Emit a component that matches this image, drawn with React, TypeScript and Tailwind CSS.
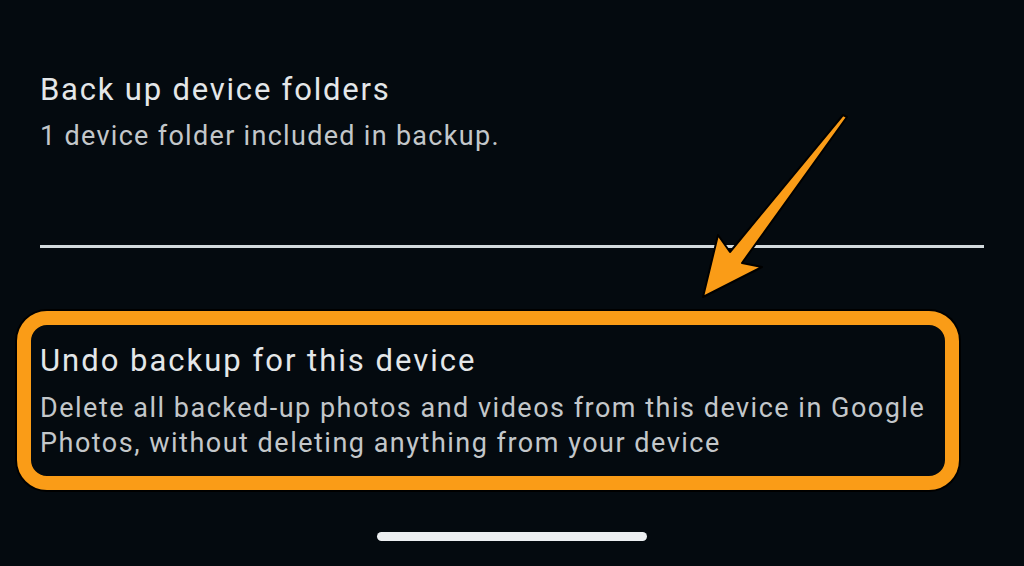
import React from "react";

export default function App() {
  return (
    <div
      className="relative w-[1024px] h-[566px] overflow-hidden bg-[#040a0f] flex flex-col"
      style={{ fontFamily: "Roboto, 'Noto Sans', sans-serif" }}
    >
      <div className="pl-[40px] pt-[70px]">
        <div className="text-[31px] leading-[40px] tracking-[1.8px] text-[#e4e7e9]">Back up device folders</div>
        <div className="text-[27px] leading-[32px] tracking-[1.3px] text-[#c3c7ca] mt-[10px]">1 device folder included in backup.</div>
      </div>
      <div className="ml-[40px] w-[944px] h-[3px] bg-[#d3dadd] mt-[93px]" />
      <div className="ml-[17px] mt-[63px] w-[942px] h-[179px] rounded-[30px] border-[14px] border-[#fa9c17] shadow-[0_0_0_2px_#000] pl-[9px] pt-[16px]">
        <div className="text-[31px] leading-[40px] tracking-[2px] text-[#e4e7e9] whitespace-nowrap">Undo backup for this device</div>
        <div className="text-[27px] leading-[35px] tracking-[1.5px] text-[#c3c7ca] mt-[10px] whitespace-nowrap">
          Delete all backed-up photos and videos from this device in Google
          <br />
          Photos, without deleting anything from your device
        </div>
      </div>
      <div className="self-start ml-[377px] mt-[42px] w-[270px] h-[9px] rounded-full bg-[#eceff1]" />
      <svg className="absolute left-0 top-0" width="1024" height="566" viewBox="0 0 1024 566">
        <polygon
          points="847,117 742,263 762,267 703,297 718,235 730,252 843,115"
          fill="#fa9c17"
          stroke="#000"
          strokeWidth="2"
          strokeLinejoin="round"
        />
      </svg>
    </div>
  );
}
